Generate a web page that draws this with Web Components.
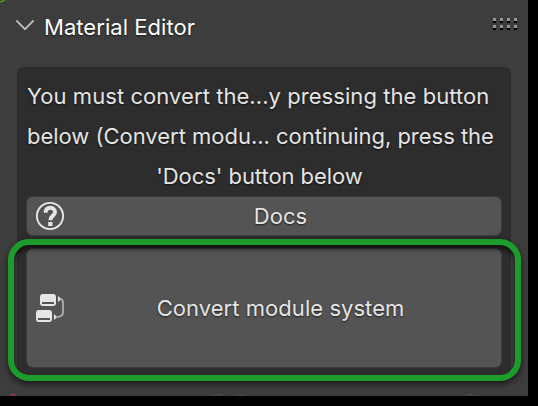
<!DOCTYPE html>
<html lang="en">
<head>
<meta charset="utf-8">
<title>Material Editor</title>
<style>
body{margin:0;width:538px;height:406px;overflow:hidden;background:#000;font-family:Inter,"Liberation Sans",sans-serif;font-size:22px;color:#e5e5e5}
</style>
</head>
<body>
<editor-panel>
  <panel-header slot="header">Material Editor</panel-header>
  <message-box>
    <text-line style="--ls:.06px">You must convert the...y pressing the button</text-line>
    <text-line style="--ls:-.02px">below (Convert modu... continuing, press the</text-line>
    <text-line class="mid" style="--ls:-.05px">'Docs' button below</text-line>
    <tool-button icon="help">Docs</tool-button>
    <tool-button icon="nodes" style="--h:120px;margin-top:12px">Convert module system</tool-button>
  </message-box>
  <focus-ring slot="overlay"></focus-ring>
</editor-panel>
<script>
const define = (name, html, setup) => customElements.define(name, class extends HTMLElement {
  constructor() {
    super();
    this.attachShadow({mode: 'open'}).innerHTML = html;
  }
  connectedCallback() { if (setup) setup(this); }
});

define('editor-panel', `<style>
:host{display:block;position:relative;box-sizing:border-box;width:528px;height:396px;background:#3d3d3d;overflow:hidden}
.edge{position:absolute;left:0;top:0;width:528px;height:396px}
</style>
<slot name="header"></slot><slot></slot>
<svg class="edge" viewBox="0 0 528 396" fill="none">
<path d="M0 2.2L5 0" stroke="#5c8526" stroke-width="1.6"/>
<path d="M11 394.5H14L15.5 396" stroke="#a53a4c" stroke-width="1.4"/>
<path d="M214 395.500Q217 394 222 394.700M238 394.500L243 396M467 394.500H471L473 396" stroke="#505050" stroke-width="1"/>
</svg>
<slot name="overlay"></slot>`);

define('panel-header', `<style>
:host{display:flex;box-sizing:border-box;height:67px;padding:13px 9px 0 15px;align-items:flex-start;color:#fff;line-height:28px;letter-spacing:.05px;text-shadow:0 1px 2px #0009}
.arrow{margin:5px 9px 0 0}
.grip{margin:5px 0 0 auto}
</style>
<svg class="arrow" width="20" height="14" fill="none" stroke="#bcbcbc" stroke-width="1.8"><path d="M1.400 2.500L10 11.200L18.600 2.500"/></svg>
<span><slot></slot></span>
<svg class="grip" width="26" height="12" shape-rendering="crispEdges">
<path fill="#949494" d="M0 0h3v3h-3zM7 0h3v3h-3zM14 0h3v3h-3zM21 0h3v3h-3zM0 7h3v3h-3zM7 7h3v3h-3zM14 7h3v3h-3zM21 7h3v3h-3z"/>
<path fill="#000" d="M0 3h3v2h-3zM7 3h3v2h-3zM14 3h3v2h-3zM21 3h3v2h-3zM0 10h3v2h-3zM7 10h3v2h-3zM14 10h3v2h-3zM21 10h3v2h-3z"/></svg>`);

define('message-box', `<style>
:host{display:flex;flex-direction:column;box-sizing:border-box;width:494px;height:310px;margin-left:17px;padding:9px 9px 0;background:#2d2d2d;border-radius:6px}
</style><slot></slot>`);

define('text-line', `<style>
:host{display:block;height:40px;line-height:40px;white-space:nowrap;letter-spacing:var(--ls);text-shadow:0 1px 2px #000a;padding-left:1px}
:host(.mid){text-align:center;padding:0 9px 0 0}
</style><slot></slot>`);

const icons = {
help: `<circle cx="15" cy="15" r="13.100" fill="none" stroke="#e6e6e6" stroke-width="1.900"/>
<path d="M10.600 11.800C10.700 8.300 12.500 6.700 15.300 6.700C18.300 6.700 20 8.700 20 11.200C20 14.500 15.400 14.700 15.400 19.200" fill="none" stroke="#e6e6e6" stroke-width="3.900"/><path fill="#e6e6e6" d="M13.200 21h4.300v4h-4.300z"/>`,
nodes: `<path fill="#e6e6e6" fill-rule="evenodd" d="M8 1h10q3 0 3 3v6q0 3-3 3h-10q-3 0-3-3v-6q0-3 3-3zM7 9v2h12v-2zM4 17h10q3 0 3 3v6q0 3-3 3h-10q-3 0-3-3v-6q0-3 3-3zM3 25v2h12v-2z"/>
<path fill="#e6e6e6" d="M23 3L26.500 6L23 9zM19 21L22 24L19 27z"/>
<path d="M25 6Q28 6 28 9.500V19.500Q28 24 21 24" fill="none" stroke="#b4b4b4" stroke-width="1.700"/>`
};
define('tool-button', `<style>
:host{display:grid;grid-template-columns:30px 1fr 30px;align-items:center;box-sizing:border-box;height:var(--h,40px);padding:0 9px 0 8px;border:1px solid #3d3d3d;border-radius:7px;background:#545454;text-shadow:0 1px 2px #000a}
svg{display:block}
span{text-align:center;white-space:nowrap;letter-spacing:.05px;margin:0 -33px 0 1px}
</style><svg width="30" height="30"></svg><span><slot></slot></span>`,
el => { el.shadowRoot.querySelector('svg').innerHTML = icons[el.getAttribute('icon')]; });

define('focus-ring', `<style>
:host{display:block;position:absolute;left:8px;top:239px;box-sizing:border-box;width:513px;height:142px;border:6px solid #1c9c2b;border-radius:21px;box-shadow:0 3px 6px #0009,inset 0 4px 5px #0009;pointer-events:none}
</style>`);
</script>
</body>
</html>
